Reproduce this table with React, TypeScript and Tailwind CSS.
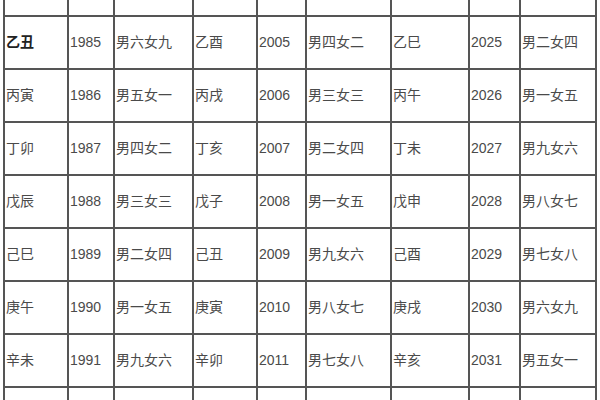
const blank = ["", "", "", "", "", "", "", "", ""];

const rows: string[][] = [
  blank,
  ["乙丑", "1985", "男六女九", "乙酉", "2005", "男四女二", "乙巳", "2025", "男二女四"],
  ["丙寅", "1986", "男五女一", "丙戌", "2006", "男三女三", "丙午", "2026", "男一女五"],
  ["丁卯", "1987", "男四女二", "丁亥", "2007", "男二女四", "丁未", "2027", "男九女六"],
  ["戊辰", "1988", "男三女三", "戊子", "2008", "男一女五", "戊申", "2028", "男八女七"],
  ["己巳", "1989", "男二女四", "己丑", "2009", "男九女六", "己酉", "2029", "男七女八"],
  ["庚午", "1990", "男一女五", "庚寅", "2010", "男八女七", "庚戌", "2030", "男六女九"],
  ["辛未", "1991", "男九女六", "辛卯", "2011", "男七女八", "辛亥", "2031", "男五女一"],
  blank,
];

export default function App() {
  return (
    <div className="w-[600px] h-[400px] overflow-hidden bg-white">
      <div
        className="-mt-[38px] ml-[3px] grid w-fit gap-[2px] p-[2px] bg-[#555555] grid-cols-[62px_44px_77px_62px_47px_83px_76px_49px_74px] auto-rows-[51px] text-[14px] text-[#4a4a4a]"
        style={{ fontFamily: '"Liberation Sans", "Noto Sans CJK SC", sans-serif' }}
      >
        {rows.map((row, r) =>
          row.map((cell, c) => (
            <div
              key={`${r}-${c}`}
              className={`flex items-center bg-white pl-px whitespace-nowrap ${
                r === 1 && c === 0 ? "font-bold text-[#222]" : ""
              }`}
            >
              {cell}
            </div>
          ))
        )}
      </div>
    </div>
  );
}
